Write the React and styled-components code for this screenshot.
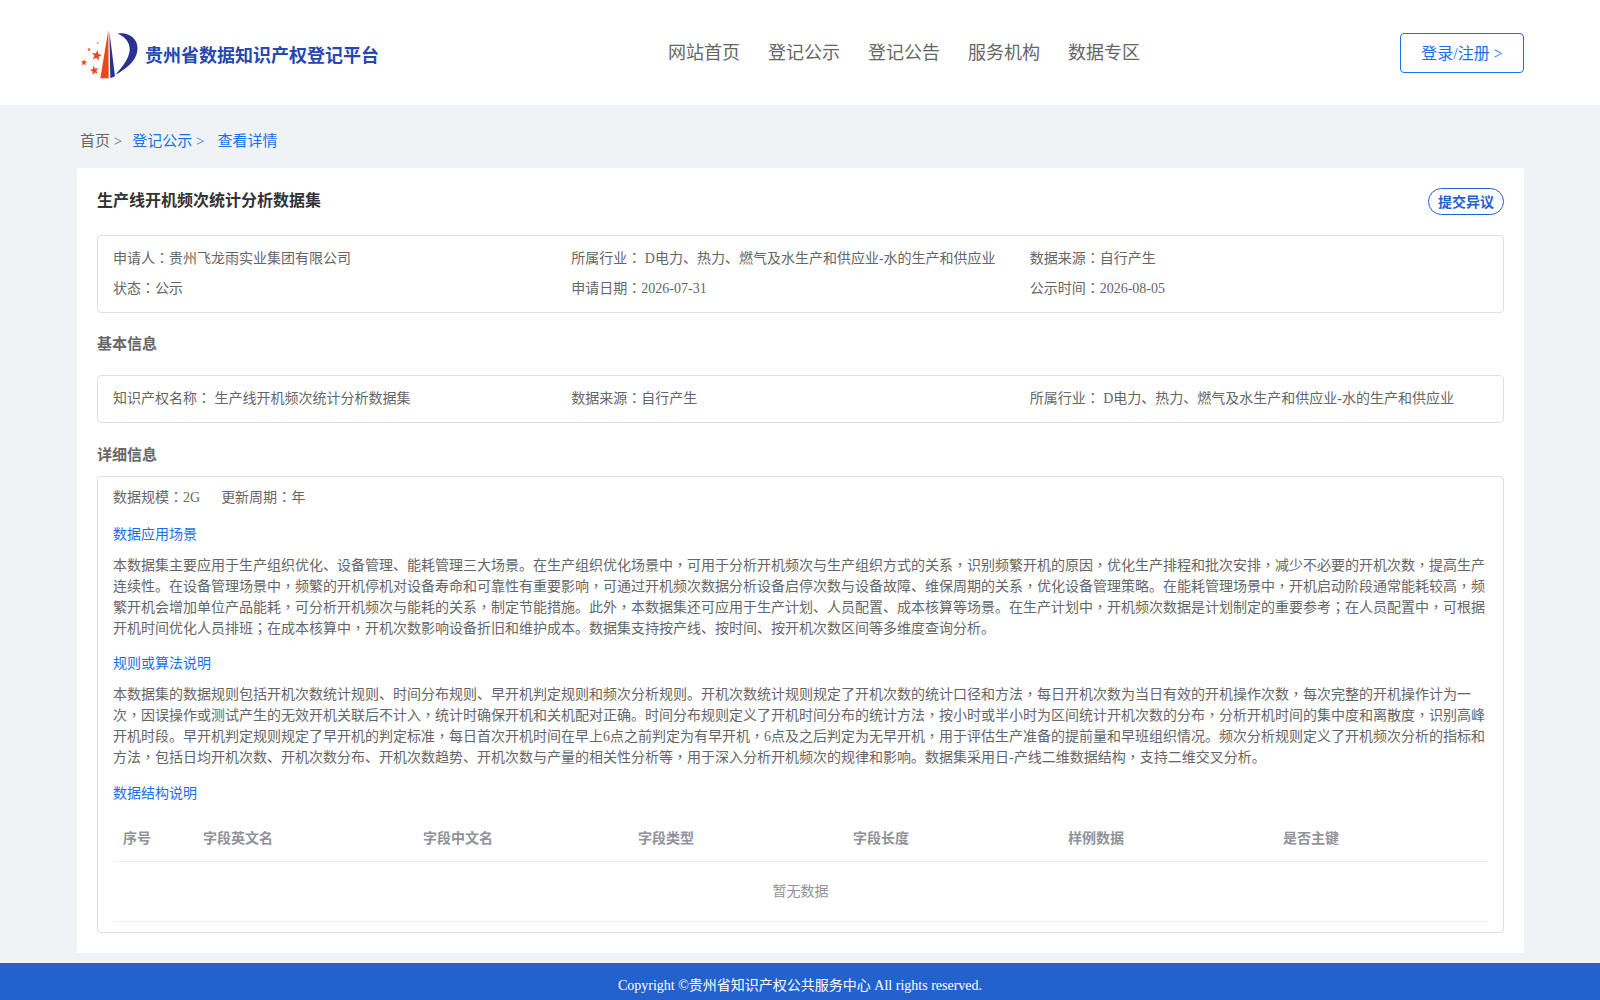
import React from 'react';
import styled, { createGlobalStyle } from 'styled-components';

const GlobalStyle = createGlobalStyle`
  html, body {
    margin: 0;
    padding: 0;
    background: #eff3f6;
    font-family: "Liberation Serif", "Noto Sans CJK SC", serif;
    font-size: 14px;
    color: #666;
  }
  * {
    box-sizing: border-box;
  }
`;

const Page = styled.div`
  width: 100%;
  height: 1000px;
  overflow: hidden;
  display: flex;
  flex-direction: column;
`;

const Header = styled.header`
  height: 105px;
  background: #fff;
  display: flex;
  align-items: center;
  justify-content: space-between;
  padding: 0 76px 0 80px;
`;

const Logo = styled.div`
  display: flex;
  align-items: center;
  gap: 6px;
  width: 588px;
  padding-top: 3px;
`;

const LogoText = styled.span`
  font-size: 18px;
  font-weight: 700;
  color: #2648b0;
`;

const Nav = styled.nav`
  display: flex;
  gap: 28px;
  flex: 1;
  padding-bottom: 3px;
`;

const NavItem = styled.a`
  font-size: 18px;
  color: #666;
  cursor: pointer;
`;

const LoginButton = styled.button`
  width: 124px;
  height: 40px;
  padding: 0 0 2px;
  background: #fff;
  border: 1px solid #1a6fe8;
  border-radius: 4px;
  color: #1a6fe8;
  font-family: inherit;
  font-size: 16px;
  cursor: pointer;
`;

const Breadcrumb = styled.div`
  display: flex;
  height: 63px;
  align-items: center;
  padding: 5px 0 0 80px;
  font-size: 15px;
`;

const Crumb = styled.a`
  color: ${(p) => (p.$active ? '#1a6fe8' : '#666')};
  margin-right: ${(p) => p.$gap}px;
`;

const Card = styled.main`
  margin: 0 76px 0 77px;
  height: 785px;
  background: #fff;
  padding: 20px;
`;

const TitleRow = styled.div`
  display: flex;
  justify-content: space-between;
  height: 27px;
  margin-bottom: 20px;
`;

const Title = styled.h1`
  margin: 0;
  font-size: 16px;
  line-height: 26px;
  font-weight: 700;
  color: #333;
`;

const ObjectButton = styled.button`
  width: 76px;
  height: 27px;
  padding: 0 0 2px;
  background: #fff;
  border: 1px solid #2261ce;
  border-radius: 14px;
  color: #2261ce;
  font-family: inherit;
  font-size: 14px;
  font-weight: 700;
  cursor: pointer;
`;

const Box = styled.section`
  border: 1px solid #dcdfe6;
  border-radius: 4px;
  padding: ${(p) => p.$padding};
`;

const InfoGrid = styled.div`
  display: grid;
  grid-template-columns: repeat(3, 1fr);
  line-height: 30px;
`;

const SectionTitle = styled.h2`
  margin: 0;
  height: ${(p) => p.$height}px;
  padding-top: ${(p) => p.$top}px;
  font-size: 15px;
  line-height: 22px;
  font-weight: 700;
  color: #666;
`;

const MetaRow = styled.div`
  display: flex;
  gap: 21px;
  line-height: 22px;
`;

const SubTitle = styled.div`
  color: #1a6fe8;
  line-height: 22px;
  margin-top: ${(p) => p.$top}px;
`;

const Paragraph = styled.p`
  margin: 9px 0 0;
  line-height: 21px;
`;

const Line = styled.span`
  display: block;
  white-space: nowrap;
`;

// the comma, colon and semicolon sit centred in their box in the original
const Mark = styled.span`
  font-family: "Noto Sans CJK TC", sans-serif;
  line-height: 0;
`;

const TableHead = styled.div`
  display: grid;
  grid-template-columns: 80px 220px repeat(5, 1fr);
  height: 50px;
  margin-top: 7px;
  border-bottom: 1px solid #ebeef5;
  align-items: center;
`;

const HeadCell = styled.div`
  padding-left: 10px;
  font-weight: 700;
  color: #909399;
`;

const EmptyRow = styled.div`
  height: 60px;
  padding-bottom: 4px;
  display: flex;
  align-items: center;
  justify-content: center;
  border-bottom: 1px solid #ebeef5;
  color: #909399;
`;

const Footer = styled.footer`
  margin-top: 10px;
  height: 37px;
  padding-top: 4px;
  background: #2261ce;
  color: #fff;
  display: flex;
  align-items: center;
  justify-content: center;
`;

const starPoints = (cx, cy, r, turn) =>
  Array.from({ length: 10 }, (_, i) => {
    const radius = i % 2 ? r * 0.42 : r;
    const angle = turn + (i * Math.PI) / 5 - Math.PI / 2;
    return `${cx + radius * Math.cos(angle)},${cy + radius * Math.sin(angle)}`;
  }).join(' ');

const LogoMark = () => (
  <svg width="59" height="63" viewBox="15 0 177 180" preserveAspectRatio="none" aria-hidden="true">
    <path d="M100 20 L76 158 L101 158 Z" fill="#e8481a" />
    <path d="M103 24 L120 152 L106 158 Z" fill="#2b3190" />
    <path d="M128 30 C165 26 192 48 187 80 C182 112 150 132 122 148 C140 126 162 104 164 78 C166 56 150 40 128 30 Z" fill="#2b3190" />
    <polygon points={starPoints(65, 93, 16, 0.2)} fill="#e8481a" />
    <polygon points={starPoints(58, 136, 14, -0.2)} fill="#e8481a" />
    <polygon points={starPoints(27, 113, 10, 0.1)} fill="#e8481a" />
    <circle cx="42" cy="76" r="4" fill="#ee6a3c" />
    <circle cx="68" cy="57" r="3" fill="#f0906c" />
  </svg>
);

const withMarks = (text) =>
  text.split(/([，：；])/).map((part, i) => (i % 2 ? <Mark key={i}>{part}</Mark> : part));

const navItems = ['网站首页', '登记公示', '登记公告', '服务机构', '数据专区'];
const columns = ['序号', '字段英文名', '字段中文名', '字段类型', '字段长度', '样例数据', '是否主键'];
const industry = 'D电力、热力、燃气及水生产和供应业-水的生产和供应业';

const scenario = [
  '本数据集主要应用于生产组织优化、设备管理、能耗管理三大场景。在生产组织优化场景中，可用于分析开机频次与生产组织方式的关系，识别频繁开机的原因，优化生产排程和批次安排，减少不必要的开机次数，提高生产',
  '连续性。在设备管理场景中，频繁的开机停机对设备寿命和可靠性有重要影响，可通过开机频次数据分析设备启停次数与设备故障、维保周期的关系，优化设备管理策略。在能耗管理场景中，开机启动阶段通常能耗较高，频',
  '繁开机会增加单位产品能耗，可分析开机频次与能耗的关系，制定节能措施。此外，本数据集还可应用于生产计划、人员配置、成本核算等场景。在生产计划中，开机频次数据是计划制定的重要参考；在人员配置中，可根据',
  '开机时间优化人员排班；在成本核算中，开机次数影响设备折旧和维护成本。数据集支持按产线、按时间、按开机次数区间等多维度查询分析。',
];

const rules = [
  '本数据集的数据规则包括开机次数统计规则、时间分布规则、早开机判定规则和频次分析规则。开机次数统计规则规定了开机次数的统计口径和方法，每日开机次数为当日有效的开机操作次数，每次完整的开机操作计为一',
  '次，因误操作或测试产生的无效开机关联后不计入，统计时确保开机和关机配对正确。时间分布规则定义了开机时间分布的统计方法，按小时或半小时为区间统计开机次数的分布，分析开机时间的集中度和离散度，识别高峰',
  '开机时段。早开机判定规则规定了早开机的判定标准，每日首次开机时间在早上6点之前判定为有早开机，6点及之后判定为无早开机，用于评估生产准备的提前量和早班组织情况。频次分析规则定义了开机频次分析的指标和',
  '方法，包括日均开机次数、开机次数分布、开机次数趋势、开机次数与产量的相关性分析等，用于深入分析开机频次的规律和影响。数据集采用日-产线二维数据结构，支持二维交叉分析。',
];

export default function App() {
  return (
    <Page>
      <GlobalStyle />
      <Header>
        <Logo>
          <LogoMark />
          <LogoText>贵州省数据知识产权登记平台</LogoText>
        </Logo>
        <Nav>
          {navItems.map((item) => (
            <NavItem key={item}>{item}</NavItem>
          ))}
        </Nav>
        <LoginButton>登录/注册 &gt;</LoginButton>
      </Header>
      <Breadcrumb>
        <Crumb $gap={10}>首页 &gt;</Crumb>
        <Crumb $active $gap={13}>登记公示 &gt;</Crumb>
        <Crumb $active>查看详情</Crumb>
      </Breadcrumb>
      <Card>
        <TitleRow>
          <Title>生产线开机频次统计分析数据集</Title>
          <ObjectButton>提交异议</ObjectButton>
        </TitleRow>
        <Box $padding="8px 15px 8px">
          <InfoGrid>
            <div>{withMarks('申请人：贵州飞龙雨实业集团有限公司')}</div>
            <div>{withMarks(`所属行业： ${industry}`)}</div>
            <div>{withMarks('数据来源：自行产生')}</div>
            <div>{withMarks('状态：公示')}</div>
            <div>{withMarks('申请日期：2026-07-31')}</div>
            <div>{withMarks('公示时间：2026-08-05')}</div>
          </InfoGrid>
        </Box>
        <SectionTitle $height={62} $top={20}>基本信息</SectionTitle>
        <Box $padding="8px 15px 8px">
          <InfoGrid>
            <div>{withMarks('知识产权名称： 生产线开机频次统计分析数据集')}</div>
            <div>{withMarks('数据来源：自行产生')}</div>
            <div>{withMarks(`所属行业： ${industry}`)}</div>
          </InfoGrid>
        </Box>
        <SectionTitle $height={53} $top={21}>详细信息</SectionTitle>
        <Box $padding="10px 15px 10px">
          <MetaRow>
            <span>{withMarks('数据规模：2G')}</span>
            <span>{withMarks('更新周期：年')}</span>
          </MetaRow>
          <SubTitle $top={15}>数据应用场景</SubTitle>
          <Paragraph>
            {scenario.map((line) => (
              <Line key={line}>{withMarks(line)}</Line>
            ))}
          </Paragraph>
          <SubTitle $top={14}>规则或算法说明</SubTitle>
          <Paragraph>
            {rules.map((line) => (
              <Line key={line}>{withMarks(line)}</Line>
            ))}
          </Paragraph>
          <SubTitle $top={15}>数据结构说明</SubTitle>
          <TableHead>
            {columns.map((col) => (
              <HeadCell key={col}>{col}</HeadCell>
            ))}
          </TableHead>
          <EmptyRow>暂无数据</EmptyRow>
        </Box>
      </Card>
      <Footer>Copyright ©贵州省知识产权公共服务中心 All rights reserved.</Footer>
    </Page>
  );
}
